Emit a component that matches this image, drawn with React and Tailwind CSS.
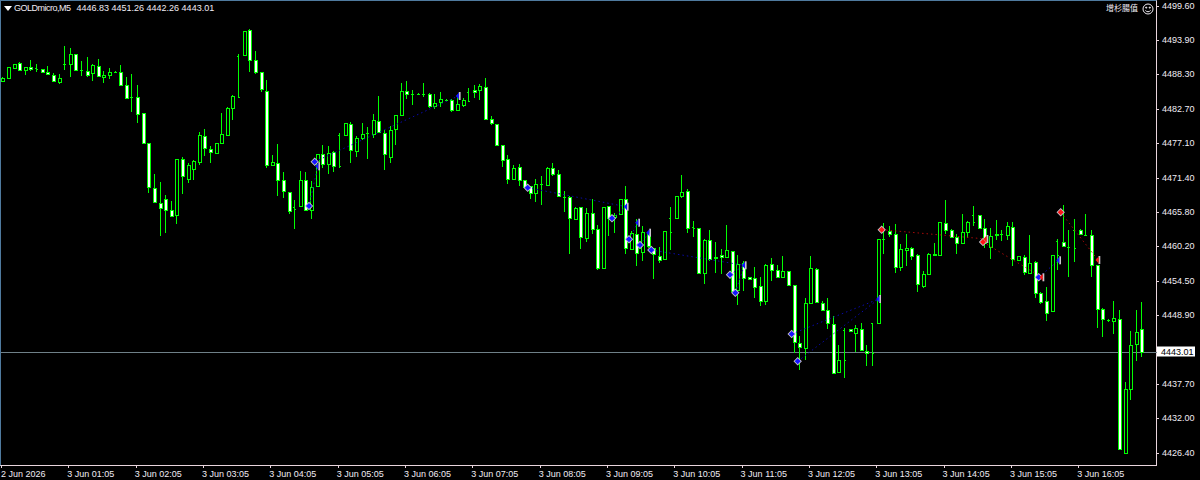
import React from "react";

const BAR_GAP = 5.611;
const FIRST_BAR = 1.4;

// [type, wickTop, bodyTop, bodyBottom, wickBottom], measured at 3x, y0 is the crop origin
// u = up candle (hollow), d = down candle (white), t = thin candle (only ticks)
const segments = [
  {
    y0: 0,
    bars: [
      ["u", 228, 232, 240, 244],
      ["u", 198, 198, 232, 232], ["u", 188, 188, 200, 200], ["d", 184, 187, 207, 210], ["u", 199, 199, 206, 221],
      ["d", 178, 198, 204, 210], ["t", 190, 202, 203, 213], ["d", 204, 205, 214, 216], ["d", 195, 213, 218, 222],
      ["d", 217, 221, 241, 243], ["u", 220, 232, 242, 250], ["t", 135, 190, 190, 207], ["u", 140, 160, 188, 228],
      ["d", 160, 160, 206, 207], ["t", 180, 208, 208, 225], ["d", 168, 211, 222, 228], ["u", 188, 192, 217, 240],
      ["d", 175, 196, 226, 228], ["u", 210, 222, 228, 245], ["u", 201, 213, 221, 233], ["t", 209, 213, 213, 217],
      ["d", 193, 214, 251, 255], ["d", 228, 251, 290, 291], ["t", 220, 289, 289, 332], ["d", 252, 289, 340, 365],
      ["d", 337, 337, 427, 428], ["d", 427, 427, 557, 575], ["d", 519, 560, 602, 603], ["d", 543, 606, 620, 704],
      ["d", 582, 595, 628, 696], ["d", 600, 628, 645, 647], ["u", 475, 475, 643, 668], ["d", 468, 475, 526, 578],
      ["u", 485, 492, 533, 545], ["u", 477, 480, 503, 537], ["u", 393, 403, 483, 492], ["d", 384, 405, 440, 465],
      ["d", 436, 443, 452, 486], ["u", 425, 425, 455, 455], ["u", 336, 398, 426, 428], ["u", 319, 322, 402, 404],
      ["u", 282, 284, 320, 356], ["t", 160, 165, 288, 290], ["u", 89, 89, 163, 165], ["d", 85, 87, 178, 212],
      ["d", 150, 178, 213, 218], ["d", 214, 214, 265, 272], ["d", 238, 271, 493, 500], ["u", 462, 483, 491, 495],
      ["d", 430, 485, 538, 584], ["d", 514, 538, 571, 590], ["d", 573, 573, 630, 638], ["t", 598, 618, 625, 684],
      ["u", 510, 538, 615, 615],
    ],
  },
  {
    y0: 60,
    bars: [
      ["d", 334, 358, 448, 450], ["u", 360, 377, 448, 473], ["u", 278, 278, 374, 374], ["d", 252, 280, 308, 320],
      ["u", 255, 277, 310, 338], ["d", 270, 274, 315, 333], ["t", 215, 222, 315, 322], ["u", 187, 187, 223, 223],
      ["d", 183, 189, 268, 305], ["u", 226, 230, 269, 288], ["u", 186, 220, 232, 238], ["t", 198, 216, 216, 293],
      ["u", 160, 177, 220, 232], ["d", 105, 179, 214, 216], ["d", 208, 216, 278, 326], ["u", 196, 208, 288, 305],
      ["u", 163, 163, 205, 252], ["u", 67, 90, 163, 165], ["d", 60, 90, 100, 113], ["t", 88, 98, 98, 132],
      ["t", 96, 99, 99, 101], ["t", 66, 99, 99, 107], ["d", 97, 100, 136, 140], ["u", 98, 125, 136, 143],
      ["u", 93, 113, 124, 137], ["t", 114, 116, 117, 119], ["d", 115, 118, 147, 152], ["u", 105, 130, 148, 150],
      ["u", 110, 118, 131, 137], ["t", 80, 92, 120, 122], ["d", 72, 86, 93, 110], ["u", 70, 76, 88, 117],
      ["d", 52, 77, 173, 176], ["d", 166, 174, 187, 191], ["d", 189, 189, 251, 252], ["d", 251, 251, 296, 318],
      ["d", 283, 295, 355, 368], ["u", 313, 320, 354, 356], ["d", 310, 319, 358, 375], ["d", 356, 358, 378, 380],
      ["d", 375, 375, 395, 414], ["u", 354, 368, 395, 422], ["t", 346, 368, 368, 431], ["u", 318, 320, 373, 375],
      ["d", 306, 322, 340, 345], ["d", 328, 340, 406, 408], ["t", 390, 407, 407, 452], ["d", 406, 409, 472, 580],
      ["u", 438, 440, 473, 475], ["d", 439, 439, 529, 563], ["u", 442, 456, 532, 542], ["d", 415, 455, 505, 520],
      ["d", 492, 505, 620, 628],
    ],
  },
  {
    y0: 170,
    bars: [
      ["u", 108, 108, 290, 290], ["d", 104, 106, 142, 195], ["u", 125, 133, 137, 185], ["u", 83, 83, 128, 130],
      ["d", 45, 84, 230, 250], ["u", 180, 187, 234, 235], ["d", 145, 190, 245, 285], ["u", 165, 182, 242, 270],
      ["d", 180, 185, 226, 230], ["d", 232, 232, 250, 323], ["d", 228, 254, 268, 275], ["u", 181, 181, 265, 265],
      ["t", 108, 140, 182, 237], ["u", 75, 75, 140, 140], ["u", 12, 62, 75, 82], ["d", 55, 61, 170, 185],
      ["t", 150, 169, 171, 197], ["d", 172, 172, 305, 306], ["u", 205, 208, 305, 338], ["d", 178, 208, 265, 270],
      ["u", 213, 257, 262, 305], ["d", 235, 251, 257, 310], ["u", 163, 238, 258, 260], ["d", 240, 240, 360, 362],
      ["u", 252, 280, 357, 402], ["d", 270, 275, 322, 360], ["d", 318, 318, 325, 326], ["d", 288, 320, 347, 382],
      ["d", 318, 345, 391, 404], ["u", 278, 281, 390, 403], ["d", 262, 280, 298, 330], ["d", 282, 296, 318, 320],
      ["u", 255, 300, 318, 320], ["d", 301, 301, 341, 345], ["d", 341, 341, 512, 545], ["d", 495, 515, 529, 597],
      ["u", 380, 397, 532, 567], ["u", 255, 292, 397, 399], ["d", 292, 294, 392, 394], ["d", 390, 397, 416, 418],
      ["d", 381, 416, 457, 473], ["d", 435, 460, 605, 607], ["u", 522, 568, 604, 605], ["t", 472, 478, 567, 620],
      ["d", 474, 474, 479, 479], ["u", 463, 472, 485, 543], ["d", 457, 475, 538, 540], ["d", 522, 539, 545, 584],
      ["t", 457, 457, 546, 584], ["u", 205, 205, 457, 457], ["t", 157, 205, 205, 248], ["d", 165, 181, 188, 197],
      ["d", 160, 189, 288, 305],
    ],
  },
  {
    y0: 190,
    bars: [
      ["u", 160, 175, 228, 240], ["u", 128, 172, 176, 225], ["d", 168, 172, 194, 206], ["d", 190, 192, 280, 302],
      ["u", 240, 250, 284, 290], ["u", 186, 190, 248, 250], ["u", 156, 188, 193, 194], ["u", 93, 93, 193, 194],
      ["d", 28, 95, 116, 128], ["d", 114, 116, 137, 142], ["d", 130, 138, 155, 188], ["u", 68, 124, 157, 157],
      ["u", 90, 92, 122, 140], ["t", 45, 72, 92, 104], ["d", 71, 71, 112, 113], ["d", 85, 112, 155, 170],
      ["u", 112, 134, 169, 204], ["u", 88, 128, 132, 148], ["t", 116, 128, 128, 150], ["u", 93, 106, 132, 148],
      ["d", 93, 108, 205, 224], ["u", 196, 196, 206, 206], ["d", 193, 198, 244, 252], ["u", 132, 215, 246, 250],
      ["d", 210, 212, 307, 320], ["d", 304, 306, 332, 338], ["d", 288, 331, 367, 389], ["u", 193, 193, 361, 361],
      ["t", 145, 149, 193, 237], ["d", 42, 152, 164, 165], ["t", 118, 167, 167, 257], ["t", 85, 117, 170, 212],
      ["d", 114, 116, 130, 132], ["t", 70, 131, 131, 136], ["d", 117, 131, 222, 258], ["d", 223, 223, 355, 410],
      ["d", 350, 355, 385, 438], ["t", 385, 386, 387, 392], ["u", 330, 382, 389, 430], ["d", 356, 383, 773, 774],
      ["u", 573, 595, 785, 788], ["u", 420, 461, 595, 627], ["u", 357, 422, 460, 510], ["d", 333, 413, 482, 497],
    ],
  },
];

const bars = segments.flatMap((s) =>
  s.bars.map(([type, wt, bt, bb, wb]) => ({
    type,
    wt: Math.round(s.y0 + wt / 3),
    bt: Math.round(s.y0 + bt / 3),
    bb: Math.round(s.y0 + bb / 3),
    wb: Math.round(s.y0 + wb / 3),
  }))
);

const blueLines = [
  [308, 205, 316.7, 165.3],
  [313.7, 160.7, 457.3, 95],
  [526.7, 186.7, 625.3, 205.7],
  [611, 217.3, 625.3, 205.7],
  [628, 238.3, 636.7, 221.7],
  [639, 244, 647.7, 231.7],
  [650.3, 249, 743.3, 264.3],
  [729, 273.7, 743.3, 264.3],
  [734.3, 291.7, 743.3, 264.3],
  [790.7, 333, 877.7, 298],
  [796.7, 360.3, 877.7, 298],
  [1037.7, 276.3, 1057.7, 259.3],
];

const redLines = [
  [880.7, 228.7, 985, 238],
  [982, 241, 1041, 276.3],
  [1059.7, 211.3, 1097, 259],
];

// entry arrows [x, y, colour] and exit arrows that point left
const entries = [
  [308, 205, "#1414ff"], [313.7, 160.7, "#1414ff"], [526.7, 186.7, "#1414ff"], [611, 217.3, "#1414ff"],
  [628, 238.3, "#1414ff"], [639, 244, "#1414ff"], [650.3, 249, "#1414ff"], [729, 273.7, "#1414ff"],
  [734.3, 291.7, "#1414ff"], [790.7, 333, "#1414ff"], [796.7, 360.3, "#1414ff"], [1037.7, 276.3, "#1414ff"],
  [880.7, 228.7, "#ff1414"], [982, 241, "#ff1414"], [1059.7, 211.3, "#ff1414"],
];
const exits = [
  [316.7, 165.3, "#1414ff"], [457.3, 95, "#1414ff"], [625.3, 205.7, "#1414ff"], [636.7, 221.7, "#1414ff"],
  [647.7, 231.7, "#1414ff"], [743.3, 264.3, "#1414ff"], [877.7, 298, "#1414ff"], [1057.7, 259.3, "#1414ff"],
  [985, 238, "#ff1414"], [1041, 276.3, "#ff1414"], [1097, 259, "#ff1414"],
];

const prices = [
  "4499.60", "4493.90", "4488.30", "4482.70", "4477.10", "4471.40", "4465.80",
  "4460.20", "4454.50", "4448.90", "4443.01", "4437.70", "4432.00", "4426.40",
];

const times = [
  "3 Jun 01:05", "3 Jun 02:05", "3 Jun 03:05", "3 Jun 04:05", "3 Jun 05:05", "3 Jun 06:05", "3 Jun 07:05", "3 Jun 08:05",
  "3 Jun 09:05", "3 Jun 10:05", "3 Jun 11:05", "3 Jun 12:05", "3 Jun 13:05", "3 Jun 14:05", "3 Jun 15:05", "3 Jun 16:05",
];

const Candle = ({ bar, x }) => {
  const { type, wt, bt, bb, wb } = bar;
  if (type === "t") {
    return (
      <g stroke="#00ff00" strokeWidth="1">
        <line x1={x} x2={x} y1={wt} y2={wb} />
        <line x1={x - 1.5} x2={x} y1={bt + 0.5} y2={bt + 0.5} />
        <line x1={x} x2={x + 1.5} y1={bb + 0.5} y2={bb + 0.5} />
      </g>
    );
  }
  return (
    <g stroke="#00ff00" strokeWidth="1">
      <line x1={x} x2={x} y1={wt} y2={wb} />
      <rect
        x={x - 1}
        y={bt + 0.5}
        width="3"
        height={Math.max(bb - bt, 1)}
        fill={type === "d" ? "#ffffff" : "#000000"}
      />
    </g>
  );
};

const Chart = () => (
  <svg className="absolute inset-0" width="1157" height="465" viewBox="0 0 1157 465">
    <line x1="0" x2="1157" y1="351.5" y2="351.5" stroke="#6f8088" strokeWidth="1" />
    {bars.map((bar, i) => {
      const x = Math.round(FIRST_BAR + i * BAR_GAP) + 0.5;
      return <Candle key={i} bar={bar} x={x} />;
    })}
    {blueLines.map(([x1, y1, x2, y2], i) => (
      <line key={i} x1={x1} y1={y1} x2={x2} y2={y2} stroke="#0a0aa8" strokeWidth="1" strokeDasharray="1.5 3" />
    ))}
    {redLines.map(([x1, y1, x2, y2], i) => (
      <line key={i} x1={x1} y1={y1} x2={x2} y2={y2} stroke="#a80a0a" strokeWidth="1" strokeDasharray="1.5 3" />
    ))}
    {entries.map(([x, y, c], i) => (
      <g key={i}>
        <path d={`M${x - 4.2} ${y}l4.2 -4.2l4.2 4.2l-4.2 4.2z`} fill="#c8c4cc" />
        <path d={`M${x - 3} ${y}l3 -3l3 3l-3 3z`} fill={c} />
      </g>
    ))}
    {exits.map(([x, y, c], i) => (
      <g key={i}>
        <rect x={x + 0.5} y={y - 4} width="1.8" height="8" fill="#c9c4cc" />
        <path d={`M${x - 2.5} ${y}l3.2 -3.5v7z`} fill={c} />
      </g>
    ))}
  </svg>
);

export default function App() {
  return (
    <div
      className="w-[1200px] h-[480px] bg-black flex flex-col overflow-hidden text-[#f0ecf4] text-[9px] leading-none"
      style={{ fontFamily: '"Liberation Sans", "Noto Sans CJK SC", sans-serif' }}
    >
      <div className="flex h-[466px]">
        {/* chart */}
        <div className="relative w-[1158px] h-[466px] border-l-2 border-t border-l-[#4f7a9e] border-t-[#4f7a9e] border-r border-b border-r-[#e8d4dc] border-b-[#e8d4dc] -ml-px box-border">
          <Chart />
          <div className="absolute left-[3px] top-[3px] flex items-center whitespace-nowrap">
            <span className="w-0 h-0 border-l-[4px] border-r-[4px] border-t-[5px] border-l-transparent border-r-transparent border-t-white" />
            <span className="ml-[2px] tracking-[-0.5px]">GOLDmicro,M5</span>
            <span className="ml-[6px]">4446.83 4451.26 4442.26 4443.01</span>
          </div>
          <div className="absolute right-[2px] top-[2px] flex items-center gap-[4px]">
            <span className="text-[8px]">增杉腸值</span>
            <svg width="12" height="12" viewBox="0 0 12 12" fill="none" stroke="#f0ecf4" strokeWidth="1">
              <circle cx="6" cy="6" r="5" />
              <circle cx="4.2" cy="4.6" r="0.6" fill="#f0ecf4" />
              <circle cx="7.8" cy="4.6" r="0.6" fill="#f0ecf4" />
              <path d="M3.4 7.4c1.3 1.8 3.9 1.8 5.2 0" />
            </svg>
          </div>
        </div>

        {/* price axis */}
        <div className="flex flex-col flex-1 -mt-[11px]">
          {prices.map((p) => (
            <div key={p} className="h-[34.4px] shrink-0 flex items-center">
              {p === "4443.01" ? (
                <span className="bg-white text-black pl-[4px] h-[10px] flex items-center w-[38px] translate-y-[1.5px]">{p}</span>
              ) : (
                <>
                  <span className="w-[2px] h-px bg-[#e8d4dc] mr-[3px]" />
                  <span>{p}</span>
                </>
              )}
            </div>
          ))}
        </div>
      </div>

      {/* time axis */}
      <div className="flex h-[14px] relative">
        <div className="w-[67.33px] pl-[1px] pt-[4px] shrink-0 relative">
          <span className="absolute left-[1px] top-0 w-px h-[2px] bg-[#e8d4dc]" />
          2 Jun 2026
        </div>
        {times.map((t) => (
          <div key={t} className="w-[67.33px] shrink-0 pt-[4px] relative whitespace-nowrap">
            <span className="absolute left-[1px] top-0 w-px h-[2px] bg-[#e8d4dc]" />
            {t}
          </div>
        ))}
      </div>
    </div>
  );
}
